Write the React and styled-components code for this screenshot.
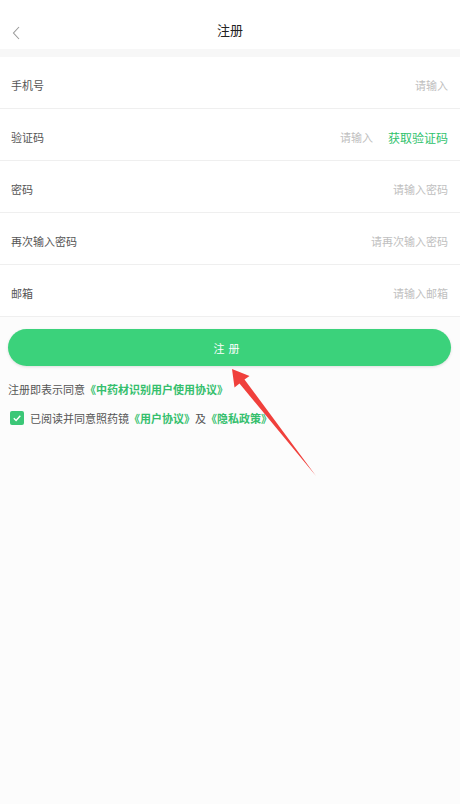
import React from 'react';
import styled, { createGlobalStyle } from 'styled-components';

const GlobalStyle = createGlobalStyle`
  html, body {
    margin: 0;
    padding: 0;
    background: #fcfcfc;
  }
  body {
    font-family: "Noto Sans CJK SC", "Noto Sans", sans-serif;
  }
`;

const Page = styled.div`
  position: relative;
  width: 460px;
  min-height: 804px;
  background: #fcfcfc;
  overflow: hidden;
`;

const NavBar = styled.div`
  height: 57px;
  box-sizing: border-box;
  padding-top: 10px;
  background: #fff;
  display: flex;
  align-items: center;
  justify-content: center;
  position: relative;
  border-bottom: 8px solid #f7f7f7;
`;

const BackButton = styled.div`
  position: absolute;
  left: 10px;
  top: 24px;
  width: 12px;
  height: 18px;
  display: flex;
`;

const Title = styled.div`
  font-size: 13px;
  color: #222;
`;

const Form = styled.div`
  background: #fff;
`;

const Row = styled.div`
  height: 52px;
  box-sizing: border-box;
  padding: 5px 12px 0 11px;
  border-bottom: 1px solid #efefef;
  display: flex;
  align-items: center;
  font-size: 11px;
`;

const Label = styled.div`
  color: #555;
  flex: 1;
`;

const Placeholder = styled.div`
  color: #c0c0c0;
`;

const CodeLink = styled.div`
  color: #2fc26c;
  font-size: 12px;
  margin-left: 15px;
`;

const Actions = styled.div`
  padding: 12px 9px 0 8px;
`;

const SubmitButton = styled.button`
  width: 100%;
  height: 37px;
  border: none;
  border-radius: 19px;
  background: #3bd27b;
  box-shadow: 0 1px 3px rgba(0, 0, 0, 0.12);
  color: #fff;
  font-family: inherit;
  font-size: 11px;
  letter-spacing: 4px;
  padding-left: 4px;
`;

const Note = styled.div`
  margin-top: ${(p) => (p.$check ? '13px' : '15px')};
  font-size: 11px;
  color: #555;
  display: flex;
  align-items: center;
  gap: ${(p) => (p.$check ? '6px' : '0')};
  padding-left: ${(p) => (p.$check ? '2px' : '0')};
`;

const Link = styled.span`
  color: #35bf6d;
  font-weight: bold;
`;

const Check = styled.div`
  width: 14px;
  height: 14px;
  border-radius: 2px;
  background: #3bc777;
  display: flex;
  align-items: center;
  justify-content: center;
`;

const ArrowLayer = styled.svg`
  position: absolute;
  left: 0;
  top: 0;
  pointer-events: none;
`;

const rows = [
  { label: '手机号', placeholder: '请输入' },
  { label: '验证码', placeholder: '请输入', code: true },
  { label: '密码', placeholder: '请输入密码' },
  { label: '再次输入密码', placeholder: '请再次输入密码' },
  { label: '邮箱', placeholder: '请输入邮箱' },
];

export default function App() {
  return (
    <Page>
      <GlobalStyle />
      <NavBar>
        <BackButton>
          <svg width="12" height="18" viewBox="0 0 12 18">
            <path d="M9 3 L3.5 9 L9 15" fill="none" stroke="#9a9a9a" strokeWidth="1.1" />
          </svg>
        </BackButton>
        <Title>注册</Title>
      </NavBar>
      <Form>
        {rows.map((r) => (
          <Row key={r.label}>
            <Label>{r.label}</Label>
            <Placeholder>{r.placeholder}</Placeholder>
            {r.code && <CodeLink>获取验证码</CodeLink>}
          </Row>
        ))}
      </Form>
      <Actions>
        <SubmitButton>注册</SubmitButton>
        <Note>
          注册即表示同意<Link>《中药材识别用户使用协议》</Link>
        </Note>
        <Note $check>
          <Check>
            <svg width="10" height="10" viewBox="0 0 10 10">
              <path d="M1.8 5.2 L4.1 7.4 L8.3 2.8" fill="none" stroke="#fff" strokeWidth="1.4" />
            </svg>
          </Check>
          <span>
            已阅读并同意照药镜<Link>《用户协议》</Link>及<Link>《隐私政策》</Link>
          </span>
        </Note>
      </Actions>
      <ArrowLayer width="460" height="804" viewBox="0 0 460 804">
        <polygon
          points="232,369 249.5,376 244.5,379.5 316,476 239.5,383.5 234.5,387.5"
          fill="#f0403c"
        />
      </ArrowLayer>
    </Page>
  );
}
